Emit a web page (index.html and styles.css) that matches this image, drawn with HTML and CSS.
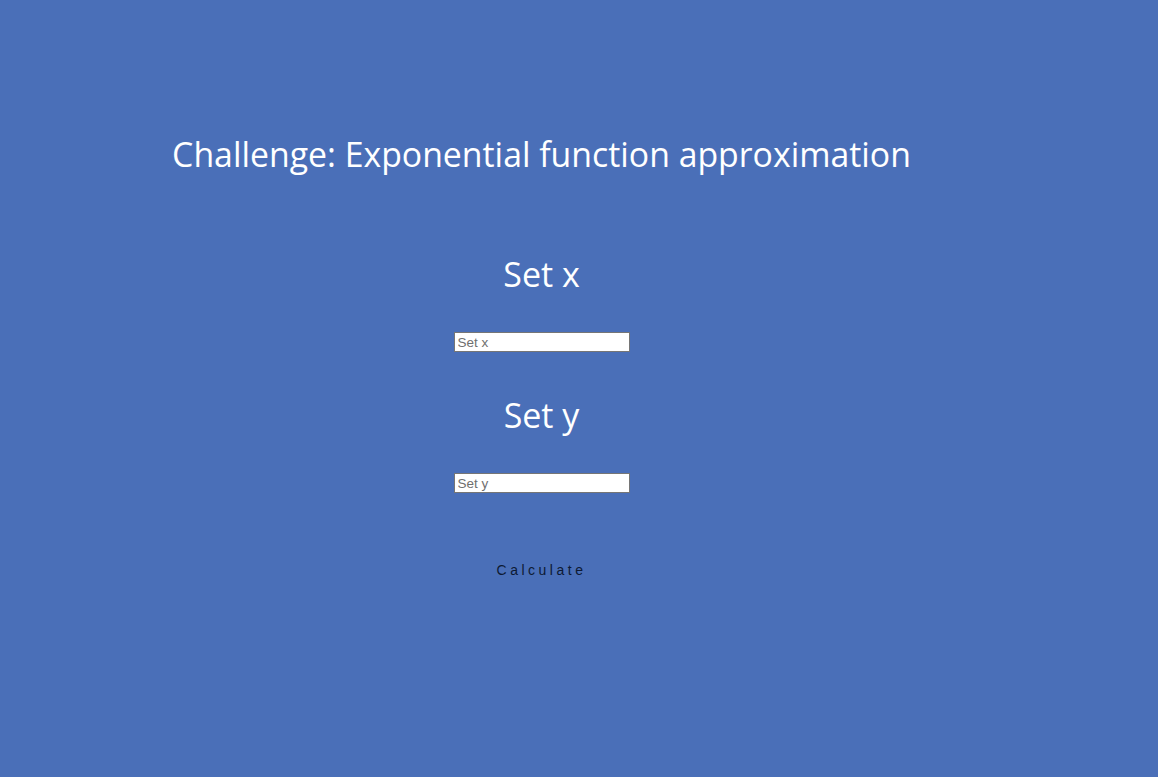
FILE: index.html
```html
<!DOCTYPE html>
<html>
<head>
<meta charset="utf-8">
<title>Challenge</title>
<link rel="stylesheet" href="styles.css">
</head>
<body>
<main class="page">
  <h1 class="title">Challenge: Exponential function approximation</h1>
  <section class="field">
    <h2 class="label">Set x</h2>
    <input class="input" type="text" placeholder="Set x">
  </section>
  <section class="field">
    <h2 class="label">Set y</h2>
    <input class="input" type="text" placeholder="Set y">
  </section>
  <button class="calc" type="button">Calculate</button>
</main>
</body>
</html>
```
FILE: styles.css
```css
html, body {
  margin: 0;
  padding: 0;
  background: #4a6fb8;
  height: 100%;
}
body {
  font-family: "Open Sans", "Noto Sans", sans-serif;
  color: #ffffff;
}
.page {
  width: 1083px;
  display: flex;
  flex-direction: column;
  align-items: center;
  padding-top: 130px;
}
.title {
  margin: 0;
  font-size: 33.8px;
  font-weight: 400;
  line-height: 48px;
}
.field {
  display: flex;
  flex-direction: column;
  align-items: center;
}
.label {
  margin: 0;
  font-size: 34px;
  font-weight: 400;
  line-height: 44px;
}
.field:first-of-type .label { margin-top: 74px; }
.field + .field .label { margin-top: 41px; }
.input {
  margin-top: 36px;
  width: 176px;
  height: 20px;
  box-sizing: border-box;
  border: 1px solid #767676;
  padding: 1px 3px;
  font-family: "Liberation Sans", Arial, sans-serif;
  font-size: 13.5px;
  background: #fff;
  color: #000;
  outline: none;
}
.input::placeholder { color: #6f6f6f; }
.calc {
  margin-top: 65px;
  background: transparent;
  border: none;
  padding: 4px 8px;
  font-family: "Liberation Sans", Arial, sans-serif;
  font-size: 14px;
  letter-spacing: 3.5px;
  color: #0d1a33;
  cursor: pointer;
}
```
